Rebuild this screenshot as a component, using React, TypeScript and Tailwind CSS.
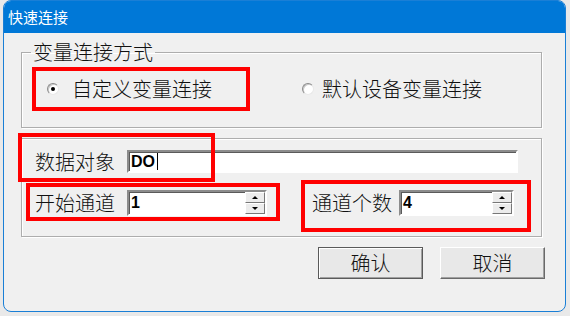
const cjk = "font-['Noto_Sans_CJK_SC','Noto_Sans_CJK_JP',sans-serif]";

function Radio({ checked }: { checked?: boolean }) {
  return (
    <span className="flex h-[12px] w-[12px] items-center justify-center rounded-full border border-t-[#8a8a8a] border-l-[#8a8a8a] border-b-[#e8e8e8] border-r-[#e8e8e8] bg-white shadow-[inset_1px_1px_0_#c8c8c8]">
      {checked && <span className="h-[4px] w-[4px] rounded-full bg-black" />}
    </span>
  );
}

function RedBox({ className }: { className: string }) {
  return <div className={"pointer-events-none absolute border-4 border-[#ff0000] " + className} />;
}

function Field({ children, className }: { children?: React.ReactNode; className: string }) {
  return (
    <div className={"flex items-center border-2 border-t-[#8c8c8c] border-l-[#8c8c8c] border-b-white border-r-white bg-white shadow-[inset_1px_1px_0_#5a5a5a] font-['Liberation_Sans',sans-serif] text-[16px] font-bold text-black " + className}>
      {children}
    </div>
  );
}

function Spinner({ value, className }: { value: string; className: string }) {
  return (
    <Field className={className}>
      <span className="flex-1 pl-[2px]">{value}</span>
      <div className="flex h-full w-[20px] flex-col">
        <div className="flex flex-1 items-center justify-center border border-t-white border-l-white border-b-[#777] border-r-[#777] bg-[#ececec]">
          <span className="h-0 w-0 border-x-[3px] border-b-[3px] border-x-transparent border-b-black" />
        </div>
        <div className="flex flex-1 items-center justify-center border border-t-white border-l-white border-b-[#777] border-r-[#777] bg-[#ececec]">
          <span className="h-0 w-0 border-x-[3px] border-t-[3px] border-x-transparent border-t-black" />
        </div>
      </div>
    </Field>
  );
}

export default function App() {
  return (
    <div className={"h-[316px] w-[570px] bg-[#e9e9e9] pb-[4px] pl-[3px] pr-[4px] " + cjk}>
      <div className="flex h-full flex-col overflow-hidden rounded-[8px] border border-[#1a7fd6] bg-[#f0f0f0]">
        <div className="flex h-[32px] shrink-0 items-center bg-[#0078d7] pl-[4px] text-[15px] text-white">
          快速连接
        </div>

        <fieldset className="ml-[17px] mt-[8px] w-[521px] border border-[#adadad] font-light shadow-[inset_1px_1px_0_white,1px_1px_0_white]">
          <legend className="ml-[9px] px-[2px] text-[20px] leading-[22px] text-[#111]">变量连接方式</legend>
          <div className="flex h-[22px] items-center pl-[25px] mt-[15px] mb-[27px] text-[20px] leading-[22px] text-[#111]">
            <div className="relative flex items-center gap-[13px]">
              <Radio checked />
              <span>自定义变量连接</span>
              <RedBox className="left-[-15px] top-[-11px] h-[44px] w-[218px]" />
            </div>
            <div className="ml-[90px] flex items-center gap-[8px]">
              <Radio />
              <span>默认设备变量连接</span>
            </div>
          </div>
        </fieldset>

        <div className="ml-[17px] mt-[10px] flex w-[521px] flex-col gap-[17px] border border-[#adadad] pb-[20px] pl-[13px] pt-[11px] text-[20px] font-light leading-[22px] text-[#111] shadow-[inset_1px_1px_0_white,1px_1px_0_white]">
          <div className="relative flex items-center gap-[12px]">
            <span>数据对象</span>
            <Field className="h-[23px] w-[391px] pl-[2px]">
              <span>DO</span>
              <span className="ml-[2px] h-[17px] w-px bg-black" />
            </Field>
            <RedBox className="left-[-17px] top-[-17px] h-[49px] w-[197px]" />
          </div>
          <div className="flex items-center">
            <div className="relative flex items-center gap-[12px]">
              <span>开始通道</span>
              <Spinner value="1" className="h-[26px] w-[140px]" />
              <RedBox className="left-[-9px] top-[-7px] h-[38px] w-[254px]" />
            </div>
            <div className="relative ml-[45px] flex items-center gap-[7px]">
              <span>通道个数</span>
              <Spinner value="4" className="h-[26px] w-[115px]" />
              <RedBox className="left-[-11px] top-[-10px] h-[52px] w-[230px]" />
            </div>
          </div>
        </div>

        <div className="mr-[20px] mt-[10px] flex justify-end gap-[17px] text-[20px] font-light text-[#111]">
          <button className="flex h-[32px] w-[105px] items-center justify-center border border-[#5a5a5a] bg-[#e8e8e8] shadow-[inset_1px_1px_0_white,inset_-1px_-1px_0_#a0a0a0]">
            确认
          </button>
          <button className="flex h-[32px] w-[105px] items-center justify-center border border-t-white border-l-white border-b-[#6a6a6a] border-r-[#6a6a6a] bg-[#e8e8e8] shadow-[inset_-1px_-1px_0_#a0a0a0]">
            取消
          </button>
        </div>
      </div>
    </div>
  );
}
